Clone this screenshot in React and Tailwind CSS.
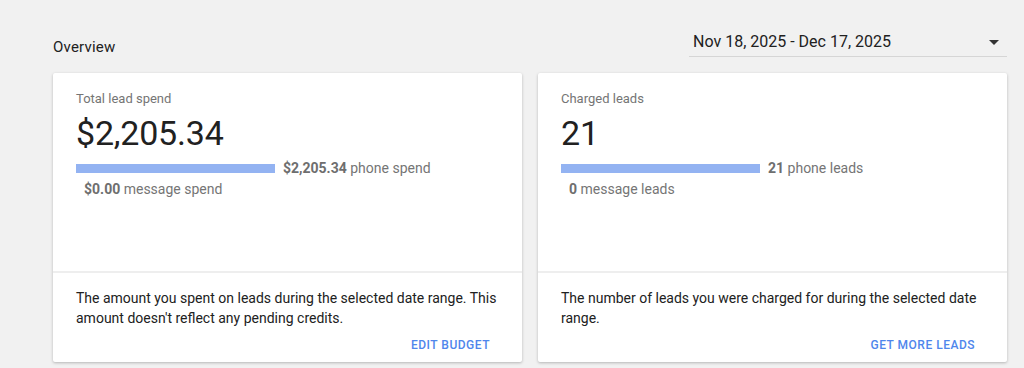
import React from 'react';

const cards = [
  {
    label: 'Total lead spend',
    value: '$2,205.34',
    phoneBold: '$2,205.34',
    phoneText: 'phone spend',
    msgBold: '$0.00',
    msgText: 'message spend',
    description:
      "The amount you spent on leads during the selected date range. This amount doesn't reflect any pending credits.",
    action: 'EDIT BUDGET',
  },
  {
    label: 'Charged leads',
    value: '21',
    phoneBold: '21',
    phoneText: 'phone leads',
    msgBold: '0',
    msgText: 'message leads',
    description: 'The number of leads you were charged for during the selected date range.',
    action: 'GET MORE LEADS',
  },
];

const StatCard = ({ card }) => (
  <div className="flex flex-col bg-white rounded-[2px] shadow-[0_1px_3px_rgba(0,0,0,0.25)] h-[289px]">
    <div className="flex-1 pl-[23px] pr-6 pt-[18px]">
      <div className="text-[13px] leading-4 text-[#757575]">{card.label}</div>
      <div className="text-[34px] leading-10 text-[#212121] mt-[6px] tracking-[-0.2px]">{card.value}</div>
      <div className="flex items-center mt-[5px] h-5">
        <div className="w-[199px] h-[9px] bg-[#93b3f2]" />
        <div className="ml-2 text-[14px] text-[#757575]">
          <span className="font-bold text-[#6e6e6e]">{card.phoneBold}</span> {card.phoneText}
        </div>
      </div>
      <div className="ml-2 mt-[1px] text-[14px] leading-5 text-[#757575]">
        <span className="font-bold text-[#6e6e6e]">{card.msgBold}</span> {card.msgText}
      </div>
    </div>
    <div className="h-[91px] flex flex-col border-t-2 border-[#eeeeee] pl-[23px] pr-8 pt-[15px] pb-[8px]">
      <p className="text-[14px] leading-5 text-[#212121] -mr-[12px]">{card.description}</p>
      <div className="flex justify-end mt-auto">
        <button className="text-[12px] font-medium text-[#4f86ec] tracking-[0.5px]">{card.action}</button>
      </div>
    </div>
  </div>
);

export default function App() {
  return (
    <div
      className="w-[1024px] h-[368px] bg-[#f1f1f1] overflow-hidden"
      style={{ fontFamily: 'Roboto, "Liberation Sans", sans-serif' }}
    >
      <div className="pl-[53px] pr-[17px] pt-[32px]">
        <div className="flex items-end justify-between h-[25px]">
          <div className="text-[15px] leading-5 tracking-[0.2px] text-[#212121]">Overview</div>
          <div className="w-[318px] flex items-center justify-between border-b border-[#d6d6d6] pl-1 pr-2 pb-[4px]">
            <span className="text-[16px] leading-5 text-[#212121]">Nov 18, 2025 - Dec 17, 2025</span>
            <svg width="10" height="5" viewBox="0 0 10 5">
              <path d="M0 0 L10 0 L5 5 Z" fill="#333" />
            </svg>
          </div>
        </div>
        <div className="grid grid-cols-2 gap-4 mt-[16px]">
          {cards.map((c) => (
            <StatCard key={c.label} card={c} />
          ))}
        </div>
      </div>
    </div>
  );
}
